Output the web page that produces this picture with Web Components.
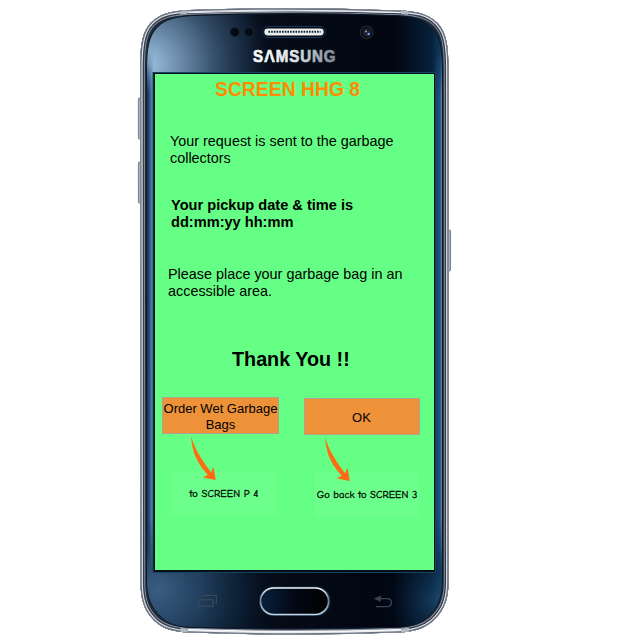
<!DOCTYPE html>
<html lang="en">
<head>
<meta charset="utf-8">
<title>Screen HHG 8</title>
<style>
html,body{margin:0;background:#fff;width:637px;height:638px;overflow:hidden}
body{font-family:"Liberation Sans",Arial,sans-serif;color:#000}
</style>
</head>
<body>
<phone-frame>
  <app-screen>
    <screen-title>SCREEN HHG 8</screen-title>
    <screen-copy style="--top:33px;--left:15px">Your request is sent to the garbage<br>collectors</screen-copy>
    <screen-copy strong style="--top:30px;--left:16px">Your pickup date &amp; time is<br>dd:mm:yy hh:mm</screen-copy>
    <screen-copy style="--top:35px;--left:13px">Please place your garbage bag in an<br>accessible area.</screen-copy>
    <thank-you>Thank You !!</thank-you>
    <action-row>
      <nav-action><span>Order Wet Garbage<br>Bags</span><span slot="note">to SCREEN P 4</span></nav-action>
      <nav-action style="--drop:1px;--w:116px;--shift:1px;--arrow:21px;--note-left:11px;--note-w:104px;--note:.04px"><span>OK</span><span slot="note">Go back to SCREEN 3</span></nav-action>
    </action-row>
  </app-screen>
</phone-frame>
<script>
function define(name, html){
  customElements.define(name, class extends HTMLElement{
    constructor(){
      super();
      const t=document.createElement('template');
      t.innerHTML=html;
      this.attachShadow({mode:'open'}).append(t.content.cloneNode(true));
    }
  });
}

define('phone-body', `
<style>:host{display:block;width:637px;height:638px}svg{display:block}</style>
<svg width="637" height="638" viewBox="0 0 637 638">
<defs>
  <path id="o" d="M140.200 70C140.200 45 142 32 151 22.500C160 13.500 171 11 190 10Q294 6.500 398 10.500C416 11 428 13.500 437 22.500C446.500 32 448.500 45 448.500 70V582C448.500 600 444 611 432.500 621.500C424 629 412 632 398 632.500Q294 636.500 190 632.500C174 632 163 629 155 621.500C144 611 140.500 600 140.500 582Z"/>
  <path id="g" d="M146.500 72C146.500 47 149 36 157 27.500C165 19 176 16.500 194 15.500Q294 12 394 15.500C412 16.500 423 19 431 27.500C440 36 442.500 47 442.500 72V580C442.500 597 438 608 428 617C420 624 410 627 394 627.500Q294 630 194 627.500C176 627 168 624 161 617C151 608 146.500 597 146.500 580Z"/>
  <clipPath id="co"><use href="#o"/></clipPath>
  <clipPath id="cg"><use href="#g"/></clipPath>
  <linearGradient id="base"><stop offset="0" stop-color="#2b4a69"/><stop offset=".1" stop-color="#152a41"/><stop offset=".4" stop-color="#050c18"/><stop offset=".82" stop-color="#010611"/><stop offset=".94" stop-color="#06203a"/><stop offset="1" stop-color="#1c5582"/></linearGradient>
  <radialGradient id="tl" gradientUnits="userSpaceOnUse" cx="148" cy="64" r="128"><stop offset="0" stop-color="#9cc2df"/><stop offset=".2" stop-color="#7596b6"/><stop offset=".5" stop-color="#3a5571"/><stop offset=".8" stop-color="#182b41" stop-opacity=".7"/><stop offset="1" stop-color="#07101e" stop-opacity="0"/></radialGradient>
  <radialGradient id="bl" gradientUnits="userSpaceOnUse" cx="158" cy="590" r="125"><stop offset="0" stop-color="#3a5d81"/><stop offset=".35" stop-color="#213f5e"/><stop offset=".7" stop-color="#0b1f34" stop-opacity=".7"/><stop offset="1" stop-color="#020a16" stop-opacity="0"/></radialGradient>
  <radialGradient id="br" gradientUnits="userSpaceOnUse" cx="438" cy="600" r="60"><stop offset="0" stop-color="#205079" stop-opacity=".6"/><stop offset="1" stop-color="#04162a" stop-opacity="0"/></radialGradient>
  <linearGradient id="ls"><stop offset="0" stop-color="#10243b"/><stop offset=".4" stop-color="#244c74"/><stop offset=".7" stop-color="#4f7ba7"/><stop offset="1" stop-color="#8fb4d2"/></linearGradient>
  <linearGradient id="rs"><stop offset="0" stop-color="#123b63"/><stop offset=".65" stop-color="#245482"/><stop offset=".8" stop-color="#5d84ad"/><stop offset="1" stop-color="#152438"/></linearGradient>
  <linearGradient id="fade" x1="0" y1="0" x2="0" y2="1"><stop offset="0" stop-color="#fff" stop-opacity="0"/><stop offset=".08" stop-color="#fff"/><stop offset=".85" stop-color="#fff"/><stop offset=".95" stop-color="#fff" stop-opacity="0"/></linearGradient>
  <mask id="fm" maskUnits="userSpaceOnUse" x="140" y="50" width="310" height="550"><rect x="140" y="50" width="310" height="550" fill="url(#fade)"/></mask>
  <linearGradient id="logo"><stop offset="0" stop-color="#fff"/><stop offset=".5" stop-color="#dfe5e9"/><stop offset="1" stop-color="#75848f"/></linearGradient>
  <linearGradient id="hb"><stop offset="0" stop-color="#08213f"/><stop offset=".5" stop-color="#020714"/><stop offset="1" stop-color="#000"/></linearGradient>
  <linearGradient id="ring" x1="0" y1="0" x2="0" y2="1"><stop offset="0" stop-color="#f5f7f8"/><stop offset=".45" stop-color="#72838f"/><stop offset="1" stop-color="#c7d6df"/></linearGradient>
</defs>
<g fill="#aab2be" stroke="#606a79" stroke-width=".8">
  <rect x="138.400" y="98" width="2.600" height="41" rx="1"/><rect x="138.400" y="162" width="2.600" height="41" rx="1"/><rect x="447.600" y="230" width="2.900" height="41" rx="1"/>
</g>
<use href="#o" fill="#202938"/>
<g clip-path="url(#co)" fill="none">
  <use href="#o" stroke="#222b3a" stroke-width="13"/>
  <use href="#o" stroke="#8991a0" stroke-width="9.400"/>
  <use href="#o" stroke="#363c4a" stroke-width="7.600"/>
  <use href="#o" stroke="#e2e6ec" stroke-width="4.800"/>
  <use href="#o" stroke="#6b7482" stroke-width="2.600"/>
  <path d="M188 12.700Q294 9.200 400 12.700" stroke="#eef0f4" stroke-width="1"/>
  <path d="M188 629.700Q294 633.700 402 629.700" stroke="#f4f6f8" stroke-width="1.800"/>
</g>
<g clip-path="url(#cg)">
  <rect x="140" width="310" height="638" fill="url(#base)"/>
  <rect x="140" width="200" height="200" fill="url(#tl)"/>
  <rect x="140" y="460" width="200" height="178" fill="url(#bl)"/>
  <rect x="370" y="535" width="80" height="100" fill="url(#br)"/>
  <g mask="url(#fm)"><rect x="146" y="50" width="8" height="550" fill="url(#ls)"/><rect x="435" y="50" width="8" height="550" fill="url(#rs)"/></g>
</g>
<use href="#g" fill="none" stroke="#0b1928" stroke-width="1"/>
<g fill="#aeb9c0"><path d="M180.500 10.800l7-.4-.5 3.600-7 .5zM401 10.600l7 .6v3.600l-7-.8zM180.500 628l7 .4v3.900l-7-.4zM401 628.400l8-.7v4l-8 .9z"/></g>
<g fill="#050b15" stroke="#1a2737"><circle cx="234.800" cy="32" r="4.700"/><circle cx="249" cy="32" r="4.700"/></g>
<rect x="262.500" y="26.500" width="63" height="11" rx="5.500" fill="#020812" stroke="#173653"/>
<rect x="264.300" y="28.600" width="59.400" height="6.800" rx="3.400" fill="#e8edf0"/>
<path d="M268.500 31.800H320.500" stroke="#15191f" stroke-width="2" stroke-dasharray="1.600 1.100"/>
<circle cx="366.700" cy="32.400" r="6.200" fill="#0b0e14" stroke="#25272d" stroke-width="1.300"/><circle cx="367" cy="32.500" r="3.400" fill="#111c32" stroke="#303743" stroke-width=".7"/><circle cx="366" cy="31.500" r="1" fill="#9aa9c4"/><circle cx="368.700" cy="34" r="1.300" fill="#6f9ee3"/>
<text x="253" y="61.700" font-family="Liberation Sans,Arial,sans-serif" font-weight="700" font-size="17" letter-spacing="1" fill="url(#logo)" stroke="url(#logo)" stroke-width=".7" textLength="83.500" lengthAdjust="spacingAndGlyphs">SAMSUNG</text>
<path d="M269.500 53.500L271.800 62.300H267.200Z" fill="#07101e"/>
<rect x="153" y="72.500" width="282.500" height="500" fill="#06101b" stroke="#164460" stroke-width="1"/>
<rect x="259.800" y="587.200" width="70" height="28" rx="14" fill="url(#hb)" stroke="#11314e" stroke-width="1.500"/>
<rect x="260.500" y="588" width="68" height="26.500" rx="13.250" fill="none" stroke="url(#ring)" stroke-width="1.600"/>
<g fill="none" stroke="#3d4a57" stroke-width="1.200"><rect x="199" y="599.700" width="14" height="6.600"/><path d="M202.500 595.500H216.300V604.300"/></g>
<g fill="none" stroke="#3b4854" stroke-width="1.300"><path d="M379 598.700H387.500Q391.300 598.700 391.300 602.600Q391.300 606.600 387.500 606.600H376"/><path d="M380.500 596L374.500 598.700L380.500 601.300Z" fill="#3b4854" stroke-width=".6"/></g>
</svg>`);

define('phone-frame', `
<style>
:host{display:grid;width:637px;height:638px}
phone-body,.view{grid-area:1/1}
.view{display:flex;z-index:1;padding:74px 203px 68px 155px}
</style>
<phone-body></phone-body><div class="view"><slot></slot></div>`);

define('app-screen', `
<style>:host{display:flex;flex-direction:column;width:279px;height:496px;background:#66ff85;overflow:hidden}</style><slot></slot>`);

define('screen-title', `
<style>:host{display:block;padding:4px 0 0 60px;font-weight:700;font-size:19.350px;line-height:22px;color:#ff8c00;white-space:nowrap}</style><slot></slot>`);

define('screen-copy', `
<style>:host{display:block;margin:var(--top) 0 0 var(--left);font-size:14.400px;line-height:17px;white-space:nowrap}:host([strong]){font-weight:700;font-size:14.600px}</style><slot></slot>`);

define('thank-you', `
<style>:host{display:block;margin:48px 0 0 77px;font-weight:700;font-size:19.750px;line-height:23px;white-space:nowrap}</style><slot></slot>`);

define('curved-arrow', `
<style>:host{display:block;width:27px;height:46px}svg{display:block}</style>
<svg width="27" height="46" viewBox="0 0 27 46"><path d="M0 -1C2 6 5 13 9.500 20C12.500 25 15.500 29.500 20 35.200L22.500 29.800L24.800 43L11.800 40.600L16.700 37.800C11 31.500 6.500 25 4 18.500C1.800 12.500.5 6 0 -1Z" fill="#ff6a13"/></svg>`);

define('link-note', `
<style>:host{display:flex;justify-content:center;align-items:center;box-sizing:border-box;height:44px;padding-top:1px;background:#6dff8c;font:10.500px/14px "Comic Sans MS","Comic Neue","Comic Relief",cursive;-webkit-text-stroke:.3px #000;letter-spacing:var(--note,.08px);white-space:nowrap}</style><slot></slot>`);

define('nav-action', `
<style>
:host{display:block;width:var(--w,117px);margin-top:var(--drop,0)}
button{display:flex;align-items:center;justify-content:center;box-sizing:border-box;width:100%;height:37px;margin:0;padding:2px var(--shift,0) 0 0;border:1.500px solid #b3a08f;background:#ee923a;color:#000;font:13px/16px "Liberation Sans",Arial,sans-serif;white-space:nowrap}
.stack{display:grid;padding-top:3px}
curved-arrow{grid-area:1/1;margin-left:var(--arrow,29px);z-index:1}
link-note{grid-area:1/1;margin:34px 0 0 var(--note-left,10px);width:var(--note-w,104px)}
</style>
<button><slot></slot></button><div class="stack"><link-note><slot name="note"></slot></link-note><curved-arrow></curved-arrow></div>`);

define('action-row', `
<style>:host{display:flex;gap:25px;margin:26px 0 0 7px;align-items:flex-start}</style><slot></slot>`);
</script>
</body>
</html>
